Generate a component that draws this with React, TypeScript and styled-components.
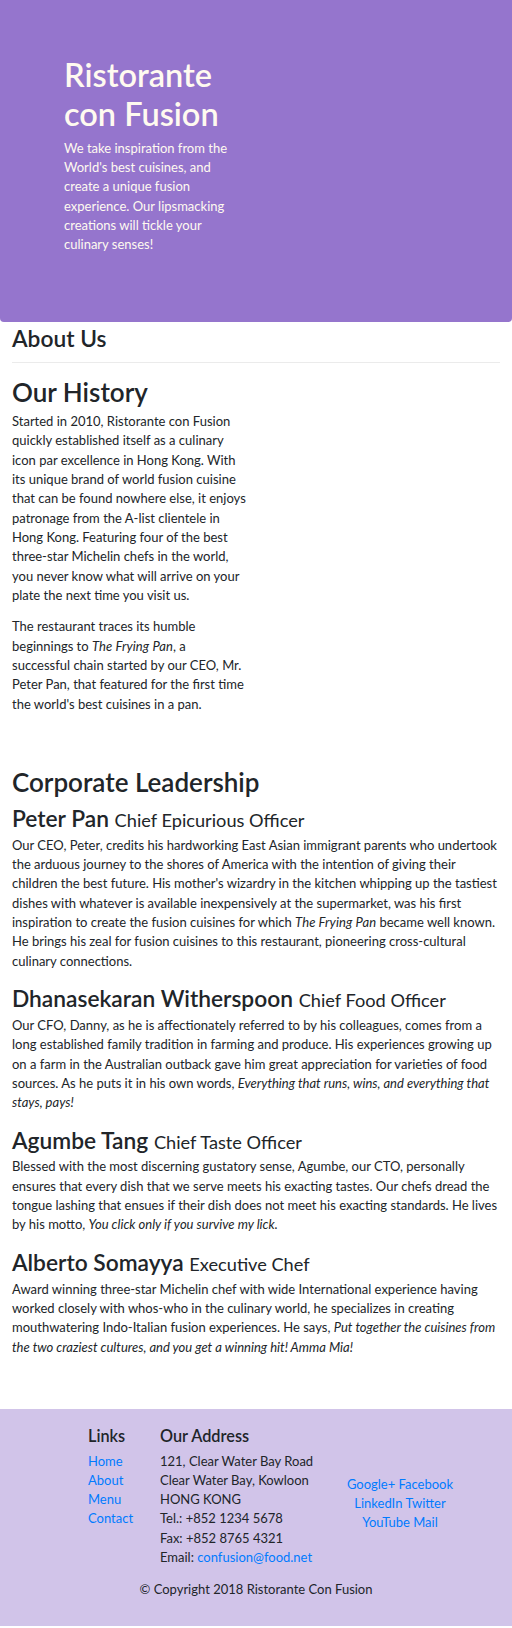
import React from "react";
import styled, { createGlobalStyle } from "styled-components";

const GlobalStyle = createGlobalStyle`
  html, body { margin: 0; padding: 0; }
  body {
    font-family: Lato, "Open Sans", sans-serif;
    font-size: 13px;
    line-height: 19.35px;
    color: #212529;
    background: #fff;
  }
  * { box-sizing: border-box; }
`;

const Hero = styled.header`
  background: #9575cd;
  border-radius: 0 0 4px 4px;
  height: 322px;
  padding: 56px 0 0 64px;
  color: floralwhite;
`;

const HeroCol = styled.div`
  width: 174px;
`;

const HeroTitle = styled.h1`
  margin: 0 0 6px;
  font-size: 32.5px;
  line-height: 38.5px;
  font-weight: 600;
`;

const HeroText = styled.p`
  margin: 0;
  line-height: 19.2px;
`;

const Main = styled.main`
  padding: 2.5px 12px 0;
`;

const PageTitle = styled.h3`
  margin: 0;
  font-size: 22.75px;
  line-height: 1.2;
  font-weight: 600;
`;

const Rule = styled.hr`
  margin: 10px 0 14px;
  border: 0;
  border-top: 1px solid rgba(0, 0, 0, 0.08);
`;

const SectionTitle = styled.h2<{ $gap?: number }>`
  margin: 0 0 ${(p) => p.$gap ?? 6.5}px;
  font-size: 26px;
  line-height: 1.2;
  font-weight: 600;
`;

const HistoryCol = styled.div`
  width: 234px;
`;

const Para = styled.p`
  margin: 0 0 12px;
`;

const BookTitle = styled.em`
  font-style: italic;
  letter-spacing: 0.1px;
`;

const Quote = styled.em`
  font-style: italic;
`;

const Leadership = styled.section`
  margin-top: 53px;
`;

const Leader = styled.div`
  & + & { margin-top: 14px; }
`;

const LeaderName = styled.h3`
  margin: 0 0 3.5px;
  font-size: 22.75px;
  line-height: 1.2;
  font-weight: 600;
`;

const Role = styled.small`
  font-size: 80%;
  font-weight: 400;
`;

const Footer = styled.footer`
  margin-top: 52.4px;
  background: #d1c4e9;
  padding: 17px 0 14px;
`;

const FooterRow = styled.div`
  display: grid;
  grid-template-columns: 72px 169px 142px;
  margin-left: 88px;
`;

const FooterCol = styled.div<{ $center?: boolean }>`
  ${(p) => (p.$center ? "align-self: center; text-align: center;" : "")}
`;

const FooterHeading = styled.h5`
  margin: 0 0 6px;
  font-size: 16.25px;
  line-height: 1.2;
  font-weight: 600;
`;

const LinkList = styled.ul`
  list-style: none;
  margin: 0;
  padding: 0;
  line-height: 19.2px;
`;

const Link = styled.a`
  color: #007bff;
  text-decoration: none;
`;

const Address = styled.address`
  font-style: normal;
  margin: 0 0 13px;
  line-height: 19.2px;
`;

const SocialLinks = styled.div`
  line-height: 19px;
`;

const Copyright = styled.p`
  margin: 0 0 13px;
  text-align: center;
`;

const leaders = [
  {
    name: "Peter Pan",
    role: "Chief Epicurious Officer",
    text: (
      <>
        Our CEO, Peter, credits his hardworking East Asian immigrant parents who undertook the arduous journey to the
        shores of America with the intention of giving their children the best future. His mother's wizardry in the
        kitchen whipping up the tastiest dishes with whatever is available inexpensively at the supermarket, was his
        first inspiration to create the fusion cuisines for which <BookTitle>The Frying Pan</BookTitle> became well
        known. He brings his zeal for fusion cuisines to this restaurant, pioneering cross-cultural culinary
        connections.
      </>
    ),
  },
  {
    name: "Dhanasekaran Witherspoon",
    role: "Chief Food Officer",
    text: (
      <>
        Our CFO, Danny, as he is affectionately referred to by his colleagues, comes from a long established family
        tradition in farming and produce. His experiences growing up on a farm in the Australian outback gave him great
        appreciation for varieties of food sources. As he puts it in his own words,{" "}
        <Quote>Everything that runs, wins, and everything that stays, pays!</Quote>
      </>
    ),
  },
  {
    name: "Agumbe Tang",
    role: "Chief Taste Officer",
    text: (
      <>
        Blessed with the most discerning gustatory sense, Agumbe, our CTO, personally ensures that every dish that we
        serve meets his exacting tastes. Our chefs dread the tongue lashing that ensues if their dish does not meet his
        exacting standards. He lives by his motto, <Quote>You click only if you survive my lick.</Quote>
      </>
    ),
  },
  {
    name: "Alberto Somayya",
    role: "Executive Chef",
    text: (
      <>
        Award winning three-star Michelin chef with wide International experience having worked closely with whos-who
        in the culinary world, he specializes in creating mouthwatering Indo-Italian fusion experiences. He says,{" "}
        <Quote>Put together the cuisines from the two craziest cultures, and you get a winning hit! Amma Mia!</Quote>
      </>
    ),
  },
];

export default function App() {
  return (
    <>
      <GlobalStyle />
      <Hero>
        <HeroCol>
          <HeroTitle>Ristorante con Fusion</HeroTitle>
          <HeroText>
            We take inspiration from the World's best cuisines, and create a unique fusion experience. Our lipsmacking
            creations will tickle your culinary senses!
          </HeroText>
        </HeroCol>
      </Hero>
      <Main>
        <PageTitle>About Us</PageTitle>
        <Rule />
        <SectionTitle $gap={4}>Our History</SectionTitle>
        <HistoryCol>
          <Para>
            Started in 2010, Ristorante con Fusion quickly established itself as a culinary icon par excellence in Hong
            Kong. With its unique brand of world fusion cuisine that can be found nowhere else, it enjoys patronage from
            the A-list clientele in Hong Kong. Featuring four of the best three-star Michelin chefs in the world, you
            never know what will arrive on your plate the next time you visit us.
          </Para>
          <Para>
            The restaurant traces its humble beginnings to <BookTitle>The Frying Pan</BookTitle>, a successful chain
            started by our CEO, Mr. Peter Pan, that featured for the first time the world's best cuisines in a pan.
          </Para>
        </HistoryCol>
        <Leadership>
          <SectionTitle>Corporate Leadership</SectionTitle>
          {leaders.map((l) => (
            <Leader key={l.name}>
              <LeaderName>
                {l.name} <Role>{l.role}</Role>
              </LeaderName>
              <Para>{l.text}</Para>
            </Leader>
          ))}
        </Leadership>
      </Main>
      <Footer>
        <FooterRow>
          <FooterCol>
            <FooterHeading>Links</FooterHeading>
            <LinkList>
              <li><Link href="#">Home</Link></li>
              <li><Link href="#">About</Link></li>
              <li><Link href="#">Menu</Link></li>
              <li><Link href="#">Contact</Link></li>
            </LinkList>
          </FooterCol>
          <FooterCol>
            <FooterHeading>Our Address</FooterHeading>
            <Address>
              121, Clear Water Bay Road<br />
              Clear Water Bay, Kowloon<br />
              HONG KONG<br />
              Tel.: +852 1234 5678<br />
              Fax: +852 8765 4321<br />
              Email: <Link href="#">confusion@food.net</Link>
            </Address>
          </FooterCol>
          <FooterCol $center>
            <SocialLinks>
              <Link href="#">Google+</Link> <Link href="#">Facebook</Link>
              <br />
              <Link href="#">LinkedIn</Link> <Link href="#">Twitter</Link>
              <br />
              <Link href="#">YouTube</Link> <Link href="#">Mail</Link>
            </SocialLinks>
          </FooterCol>
        </FooterRow>
        <Copyright>© Copyright 2018 Ristorante Con Fusion</Copyright>
      </Footer>
    </>
  );
}
